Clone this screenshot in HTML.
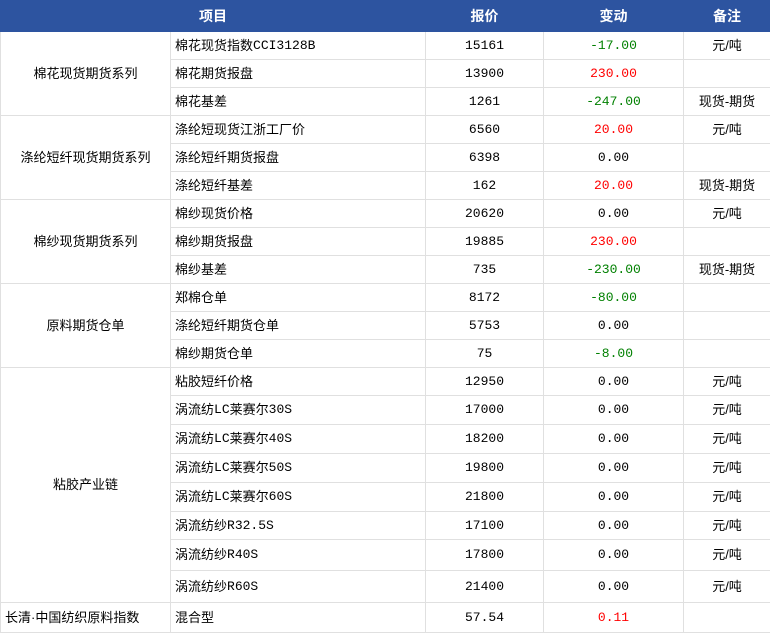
<!DOCTYPE html>
<html><head><meta charset="utf-8"><style>
body{margin:0;background:#fff;font-family:"Liberation Sans","Noto Sans CJK SC",sans-serif;font-size:13px;color:#000;overflow:hidden}
table{border-collapse:collapse;table-layout:fixed;width:770px}
td,th{border:1px solid #e0e0e0;padding:0;white-space:nowrap;overflow:hidden;line-height:16px;vertical-align:middle}
th{background:#2d54a0;color:#fff;font-weight:bold;font-size:14px;height:30px;border-color:#2d54a0}
td{text-align:center;font-weight:normal}
td.l{text-align:left;padding-left:4px}
.n{font-family:"Liberation Mono","Noto Sans CJK SC",monospace;font-size:13px;line-height:16px;vertical-align:top}
td.n{vertical-align:middle}
.g{color:#008000}.r{color:#f00}
</style></head><body>
<table>
<colgroup><col style="width:170px"><col style="width:255px"><col style="width:118px"><col style="width:140px"><col style="width:87px"></colgroup>
<tr><th colspan="2">项目</th><th>报价</th><th>变动</th><th>备注</th></tr>
<tr style="height:28px"><td rowspan="3">棉花现货期货系列</td><td class="l">棉花现货指数<span class="n">CCI3128B</span></td><td class="n">15161</td><td class="n g">-17.00</td><td>元/吨</td></tr>
<tr style="height:28px"><td class="l">棉花期货报盘</td><td class="n">13900</td><td class="n r">230.00</td><td></td></tr>
<tr style="height:28px"><td class="l">棉花基差</td><td class="n">1261</td><td class="n g">-247.00</td><td>现货-期货</td></tr>
<tr style="height:28px"><td rowspan="3">涤纶短纤现货期货系列</td><td class="l">涤纶短现货江浙工厂价</td><td class="n">6560</td><td class="n r">20.00</td><td>元/吨</td></tr>
<tr style="height:28px"><td class="l">涤纶短纤期货报盘</td><td class="n">6398</td><td class="n">0.00</td><td></td></tr>
<tr style="height:28px"><td class="l">涤纶短纤基差</td><td class="n">162</td><td class="n r">20.00</td><td>现货-期货</td></tr>
<tr style="height:28px"><td rowspan="3">棉纱现货期货系列</td><td class="l">棉纱现货价格</td><td class="n">20620</td><td class="n">0.00</td><td>元/吨</td></tr>
<tr style="height:28px"><td class="l">棉纱期货报盘</td><td class="n">19885</td><td class="n r">230.00</td><td></td></tr>
<tr style="height:28px"><td class="l">棉纱基差</td><td class="n">735</td><td class="n g">-230.00</td><td>现货-期货</td></tr>
<tr style="height:28px"><td rowspan="3">原料期货仓单</td><td class="l">郑棉仓单</td><td class="n">8172</td><td class="n g">-80.00</td><td></td></tr>
<tr style="height:28px"><td class="l">涤纶短纤期货仓单</td><td class="n">5753</td><td class="n">0.00</td><td></td></tr>
<tr style="height:28px"><td class="l">棉纱期货仓单</td><td class="n">75</td><td class="n g">-8.00</td><td></td></tr>
<tr style="height:28px"><td rowspan="8">粘胶产业链</td><td class="l">粘胶短纤价格</td><td class="n">12950</td><td class="n">0.00</td><td>元/吨</td></tr>
<tr style="height:29px"><td class="l">涡流纺<span class="n">LC</span>莱赛尔<span class="n">30S</span></td><td class="n">17000</td><td class="n">0.00</td><td>元/吨</td></tr>
<tr style="height:29px"><td class="l">涡流纺<span class="n">LC</span>莱赛尔<span class="n">40S</span></td><td class="n">18200</td><td class="n">0.00</td><td>元/吨</td></tr>
<tr style="height:29px"><td class="l">涡流纺<span class="n">LC</span>莱赛尔<span class="n">50S</span></td><td class="n">19800</td><td class="n">0.00</td><td>元/吨</td></tr>
<tr style="height:29px"><td class="l">涡流纺<span class="n">LC</span>莱赛尔<span class="n">60S</span></td><td class="n">21800</td><td class="n">0.00</td><td>元/吨</td></tr>
<tr style="height:28px"><td class="l">涡流纺纱<span class="n">R32.5S</span></td><td class="n">17100</td><td class="n">0.00</td><td>元/吨</td></tr>
<tr style="height:31px"><td class="l">涡流纺纱<span class="n">R40S</span></td><td class="n">17800</td><td class="n">0.00</td><td>元/吨</td></tr>
<tr style="height:32px"><td class="l">涡流纺纱<span class="n">R60S</span></td><td class="n">21400</td><td class="n">0.00</td><td>元/吨</td></tr>
<tr style="height:30px"><td class="l">长清·中国纺织原料指数</td><td class="l">混合型</td><td class="n">57.54</td><td class="n r">0.11</td><td></td></tr>
</table>
</body></html>
